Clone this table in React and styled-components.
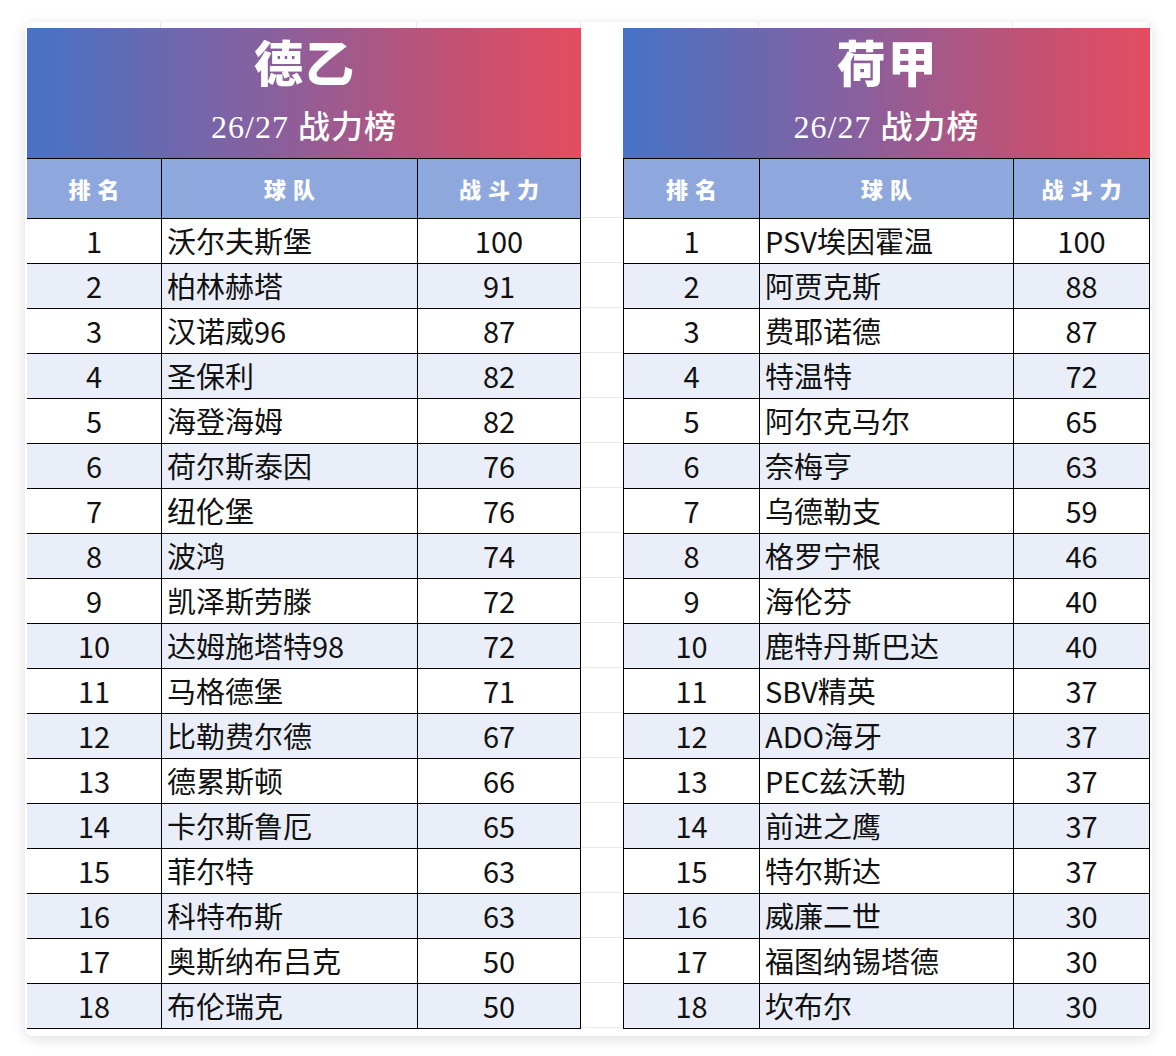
import React from "react";
import styled, { createGlobalStyle } from "styled-components";

const GlobalStyle = createGlobalStyle`
  * { box-sizing: border-box; }
  body {
    margin: 0;
    background: #fff;
    font-family: "Noto Sans CJK SC", "Noto Sans", sans-serif;
  }
`;

const bundesliga2 = [
  ["沃尔夫斯堡", 100], ["柏林赫塔", 91], ["汉诺威96", 87], ["圣保利", 82],
  ["海登海姆", 82], ["荷尔斯泰因", 76], ["纽伦堡", 76], ["波鸿", 74],
  ["凯泽斯劳滕", 72], ["达姆施塔特98", 72], ["马格德堡", 71], ["比勒费尔德", 67],
  ["德累斯顿", 66], ["卡尔斯鲁厄", 65], ["菲尔特", 63], ["科特布斯", 63],
  ["奥斯纳布吕克", 50], ["布伦瑞克", 50],
];

const eredivisie = [
  ["PSV埃因霍温", 100], ["阿贾克斯", 88], ["费耶诺德", 87], ["特温特", 72],
  ["阿尔克马尔", 65], ["奈梅亨", 63], ["乌德勒支", 59], ["格罗宁根", 46],
  ["海伦芬", 40], ["鹿特丹斯巴达", 40], ["SBV精英", 37], ["ADO海牙", 37],
  ["PEC兹沃勒", 37], ["前进之鹰", 37], ["特尔斯达", 37], ["威廉二世", 30],
  ["福图纳锡塔德", 30], ["坎布尔", 30],
];

const Page = styled.div`
  padding: 22px 24px 20px 25px;
`;

const Card = styled.div`
  display: flex;
  width: 1127px;
  padding: 0 2px 7px 2px;
  background: #fff;
  border-radius: 8px;
  box-shadow: 0 3px 14px rgba(0, 0, 0, 0.13);
`;

const Board = styled.div`
  display: flex;
  flex-direction: column;
`;

const Strip = styled.div`
  display: grid;
  grid-template-columns: ${(p) => p.$cols};
  height: ${(p) => p.$h}px;
  & > span { border-right: 1px solid #e8e8e8; }
`;

const Banner = styled.div`
  height: 130px;
  display: flex;
  flex-direction: column;
  align-items: center;
  padding-top: 11px;
  gap: 16px;
  color: #fff;
  background: linear-gradient(90deg, #4673c6 0%, #8a5f9d 45%, #bf5275 75%, #e44d5f 100%);
  font-family: "Liberation Serif", "Noto Sans CJK SC", serif;
`;

const Title = styled.div`
  font-size: 49px;
  line-height: 54px;
  font-weight: 900;
  letter-spacing: 2px;
  padding-left: 2px;
`;

const Subtitle = styled.div`
  font-size: 32px;
  line-height: 36px;
  font-weight: 500;
  letter-spacing: 1px;
`;

const Row = styled.div`
  display: grid;
  grid-template-columns: ${(p) => p.$cols};
  height: ${(p) => (p.$head ? 61 : 45)}px;
  background: ${(p) => (p.$head ? "#8ea8de" : p.$alt ? "#e9eef9" : "#fff")};
  border-top: ${(p) => (p.$head ? "1px solid #000" : "none")};
  border-bottom: 1px solid #000;
`;

const Cell = styled.div`
  display: flex;
  align-items: center;
  justify-content: ${(p) => (p.$left ? "flex-start" : "center")};
  padding-left: ${(p) => (p.$left ? "5px" : "0")};
  padding-bottom: 2px;
  border-left: ${(p) => (p.$noLeft ? "none" : "1px solid #000")};
  border-right: ${(p) => (p.$edge ? "1px solid #000" : "none")};
  font-size: 29px;
  color: #111;
  white-space: nowrap;
`;

const HeadLabel = styled.span`
  color: #fff;
  font-size: 22px;
  font-weight: 900;
  letter-spacing: 7px;
  padding-left: 7px;
`;

const Gap = styled.div`
  width: 42px;
  display: flex;
  flex-direction: column;
`;

const GapLine = styled.div`
  height: ${(p) => p.$h}px;
  border-bottom: 1px solid ${(p) => (p.$none ? "transparent" : "#e8e8e8")};
  flex-shrink: 0;
`;

function Table({ league, teams, cols, lead }) {
  return (
    <Board>
      <Strip $cols={cols} $h={6}>
        <span />
        <span />
        <span />
      </Strip>
      <Banner>
        <Title>{league}</Title>
        <Subtitle>26/27 战力榜</Subtitle>
      </Banner>
      <Row $cols={cols} $head>
        <Cell $noLeft={!lead}>
          <HeadLabel>排名</HeadLabel>
        </Cell>
        <Cell>
          <HeadLabel>球队</HeadLabel>
        </Cell>
        <Cell $edge>
          <HeadLabel>战斗力</HeadLabel>
        </Cell>
      </Row>
      {teams.map(([name, power], i) => (
        <Row key={name} $cols={cols} $alt={i % 2 === 1}>
          <Cell $noLeft={!lead}>{i + 1}</Cell>
          <Cell $left>{name}</Cell>
          <Cell $edge>{power}</Cell>
        </Row>
      ))}
    </Board>
  );
}

export default function App() {
  return (
    <>
      <GlobalStyle />
      <Page>
        <Card>
          <Table league="德乙" teams={bundesliga2} cols="134px 256px 164px" />
          <Gap>
            <GapLine $h={136} $none />
            <GapLine $h={60} />
            {bundesliga2.map(([name]) => (
              <GapLine key={name} $h={45} />
            ))}
          </Gap>
          <Table league="荷甲" teams={eredivisie} cols="136px 254px 137px" lead />
        </Card>
      </Page>
    </>
  );
}
